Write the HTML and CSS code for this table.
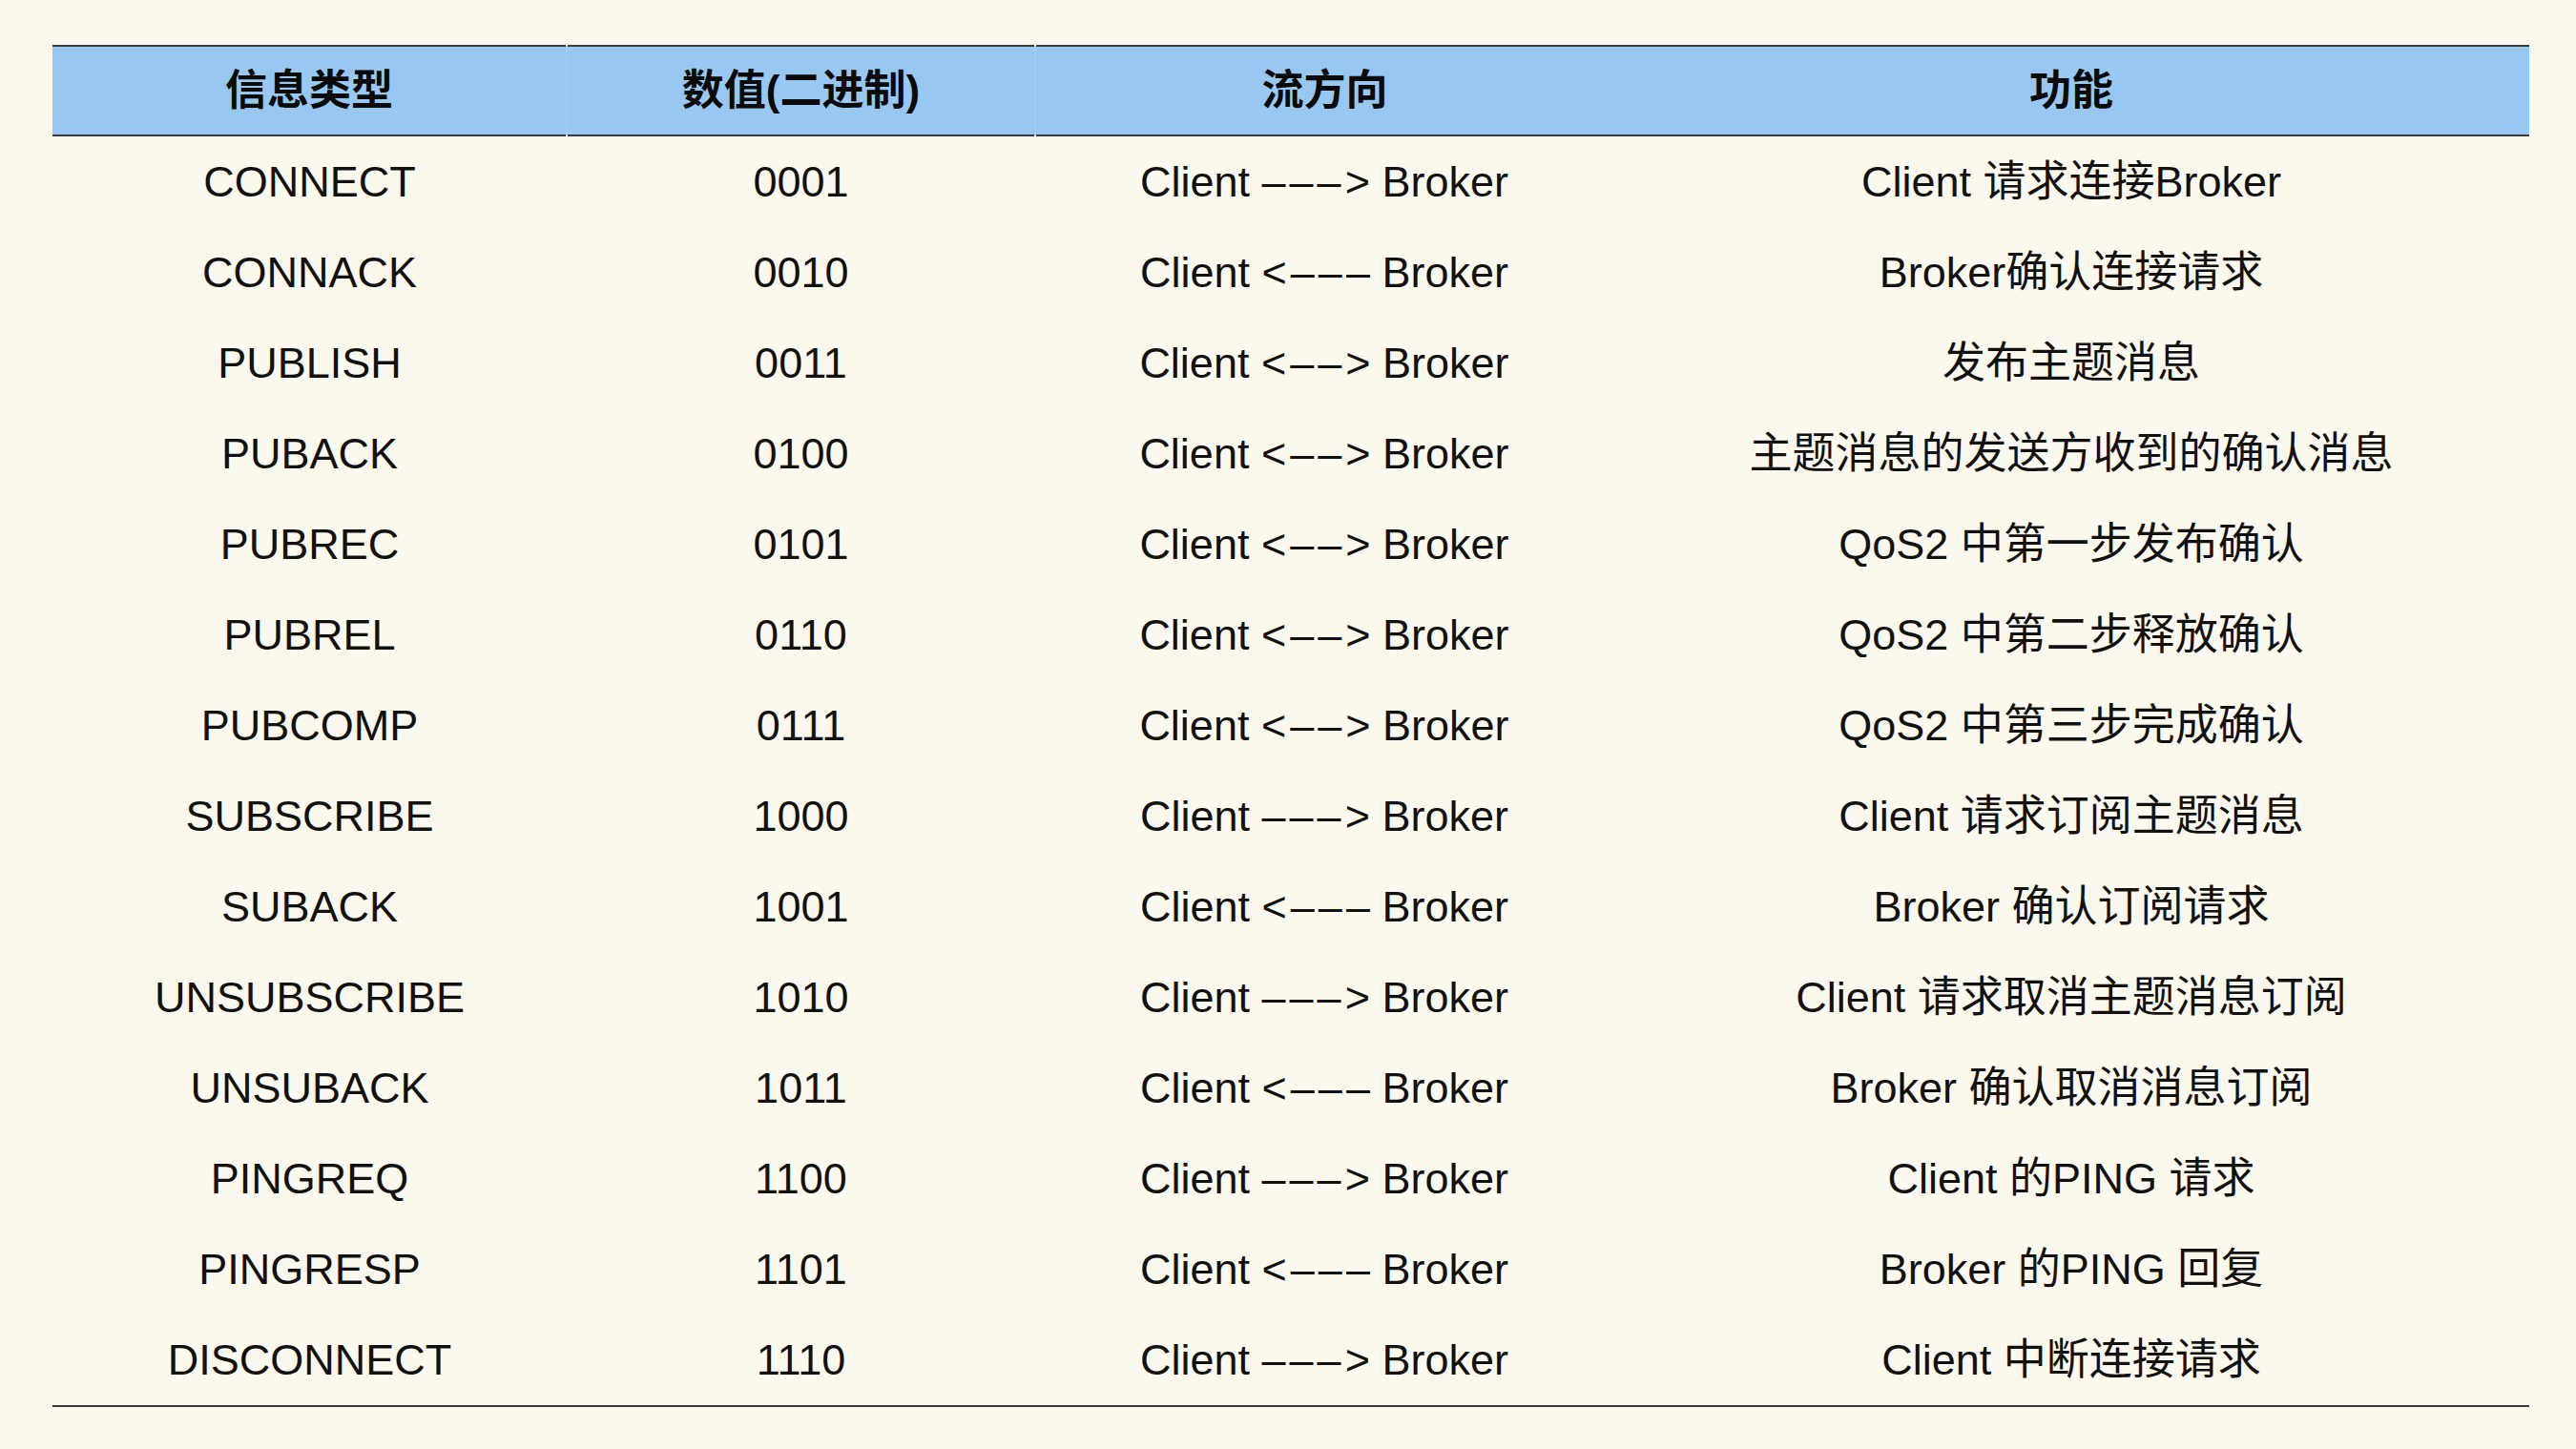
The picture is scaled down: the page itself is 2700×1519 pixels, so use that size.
FILE: index.html
```html
<!DOCTYPE html>
<html lang="zh-CN">
<head>
    <meta charset="UTF-8">
    <title>MQTT 报文类型</title>
    <link rel="stylesheet" href="styles.css">
</head>
<body>
    <div class="page">
        <table class="msg-table">
            <colgroup>
                <col class="col-type">
                <col class="col-value">
                <col class="col-flow">
                <col class="col-desc">
            </colgroup>
            <thead>
                <tr>
                    <th>信息类型</th>
                    <th class="sep">数值(二进制)</th>
                    <th class="sep">流方向</th>
                    <th>功能</th>
                </tr>
            </thead>
            <tbody>
                <tr><td>CONNECT</td><td>0001</td><td>Client <span class="arrow">–––&gt;</span> Broker</td><td>Client 请求连接Broker</td></tr>
                <tr><td>CONNACK</td><td>0010</td><td>Client <span class="arrow">&lt;–––</span> Broker</td><td>Broker确认连接请求</td></tr>
                <tr><td>PUBLISH</td><td>0011</td><td>Client <span class="arrow">&lt;––&gt;</span> Broker</td><td>发布主题消息</td></tr>
                <tr><td>PUBACK</td><td>0100</td><td>Client <span class="arrow">&lt;––&gt;</span> Broker</td><td>主题消息的发送方收到的确认消息</td></tr>
                <tr><td>PUBREC</td><td>0101</td><td>Client <span class="arrow">&lt;––&gt;</span> Broker</td><td>QoS2 中第一步发布确认</td></tr>
                <tr><td>PUBREL</td><td>0110</td><td>Client <span class="arrow">&lt;––&gt;</span> Broker</td><td>QoS2 中第二步释放确认</td></tr>
                <tr><td>PUBCOMP</td><td>0111</td><td>Client <span class="arrow">&lt;––&gt;</span> Broker</td><td>QoS2 中第三步完成确认</td></tr>
                <tr><td>SUBSCRIBE</td><td>1000</td><td>Client <span class="arrow">–––&gt;</span> Broker</td><td>Client 请求订阅主题消息</td></tr>
                <tr><td>SUBACK</td><td>1001</td><td>Client <span class="arrow">&lt;–––</span> Broker</td><td>Broker 确认订阅请求</td></tr>
                <tr><td>UNSUBSCRIBE</td><td>1010</td><td>Client <span class="arrow">–––&gt;</span> Broker</td><td>Client 请求取消主题消息订阅</td></tr>
                <tr><td>UNSUBACK</td><td>1011</td><td>Client <span class="arrow">&lt;–––</span> Broker</td><td>Broker 确认取消消息订阅</td></tr>
                <tr><td>PINGREQ</td><td>1100</td><td>Client <span class="arrow">–––&gt;</span> Broker</td><td>Client 的PING 请求</td></tr>
                <tr><td>PINGRESP</td><td>1101</td><td>Client <span class="arrow">&lt;–––</span> Broker</td><td>Broker 的PING 回复</td></tr>
                <tr><td>DISCONNECT</td><td>1110</td><td>Client <span class="arrow">–––&gt;</span> Broker</td><td>Client 中断连接请求</td></tr>
            </tbody>
        </table>
    </div>
</body>
</html>
```

FILE: styles.css
```css
html, body {
    margin: 0;
    background-color: #fbf8ee; /* fondo crema */
}

body {
    font-family: "Liberation Sans", "Noto Sans CJK SC", sans-serif;
    color: #111;
}

.page {
    padding: 47px 49px 0 55px;
}

.msg-table {
    width: 2596px;
    table-layout: fixed;
    border-collapse: collapse;
    border-bottom: 2px solid #3b3b3d;
}

.col-type { width: 539px; }
.col-value { width: 491px; }
.col-flow { width: 606px; }
.col-desc { width: 960px; }

.msg-table thead tr {
    background-color: #98c8f1;
    border-top: 2px solid #3b3b3d;
    border-bottom: 2px solid #3b3b3d;
}

.msg-table th {
    height: 92px;
    padding: 0;
    font-size: 44px;
    font-weight: 700;
    line-height: 1.2;
    color: #0a0a0a;
    text-align: center;
}

/* lineas divisorias muy tenues en el encabezado */
.msg-table th.sep {
    border-left: 2px solid rgba(255, 255, 255, 0.08);
}

.msg-table td {
    height: 95px;
    padding: 0;
    font-size: 45px;
    line-height: 1.2;
    text-align: center;
    white-space: nowrap;
}

.arrow {
    letter-spacing: 4px;
    margin-right: -4px;
}
```
